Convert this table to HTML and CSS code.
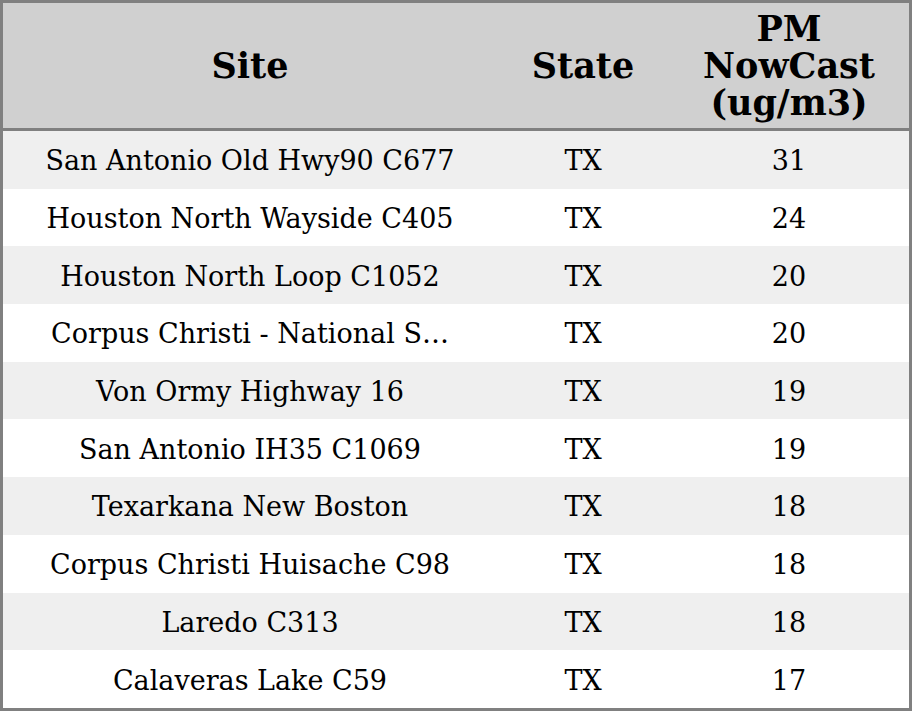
FILE: index.html
```html
<!DOCTYPE html>
<html>
<head>
<meta charset="utf-8">
<link rel="stylesheet" href="styles.css">
</head>
<body>
<table class="grid">
  <colgroup>
    <col class="c-site">
    <col class="c-state">
    <col class="c-pm">
  </colgroup>
  <thead>
    <tr>
      <th>Site</th>
      <th>State</th>
      <th>PM<br>NowCast<br>(ug/m3)</th>
    </tr>
  </thead>
  <tbody>
    <tr><td>San Antonio Old Hwy90 C677</td><td>TX</td><td>31</td></tr>
    <tr><td>Houston North Wayside C405</td><td>TX</td><td>24</td></tr>
    <tr><td>Houston North Loop C1052</td><td>TX</td><td>20</td></tr>
    <tr><td>Corpus Christi - National S…</td><td>TX</td><td>20</td></tr>
    <tr><td>Von Ormy Highway 16</td><td>TX</td><td>19</td></tr>
    <tr><td>San Antonio IH35 C1069</td><td>TX</td><td>19</td></tr>
    <tr><td>Texarkana New Boston</td><td>TX</td><td>18</td></tr>
    <tr><td>Corpus Christi Huisache C98</td><td>TX</td><td>18</td></tr>
    <tr><td>Laredo C313</td><td>TX</td><td>18</td></tr>
    <tr><td>Calaveras Lake C59</td><td>TX</td><td>17</td></tr>
  </tbody>
</table>
</body>
</html>
```
FILE: styles.css
```css
html, body {
  margin: 0;
  padding: 0;
  background: #ffffff;
}
.grid {
  width: 912px;
  height: 711px;
  border-collapse: separate;
  border-spacing: 0;
  border: 3px solid #808080;
  box-sizing: border-box;
  table-layout: fixed;
  font-family: "DejaVu Serif", serif;
  color: #000;
}
.c-site { width: 494px; }
.c-state { width: 172px; }
.c-pm { width: 240px; }
.grid th {
  background: #d0d0d0;
  font-weight: bold;
  font-size: 35px;
  line-height: 37px;
  height: 128px;
  padding: 0;
  text-align: center;
  vertical-align: middle;
  border-bottom: 3px solid #808080;
  box-sizing: border-box;
}
.grid td {
  font-size: 27px;
  height: 55px;
  padding: 2px 0 0;
  text-align: center;
  vertical-align: middle;
  white-space: nowrap;
}
.grid tbody tr:nth-child(odd) td {
  background: #efefef;
}
```
